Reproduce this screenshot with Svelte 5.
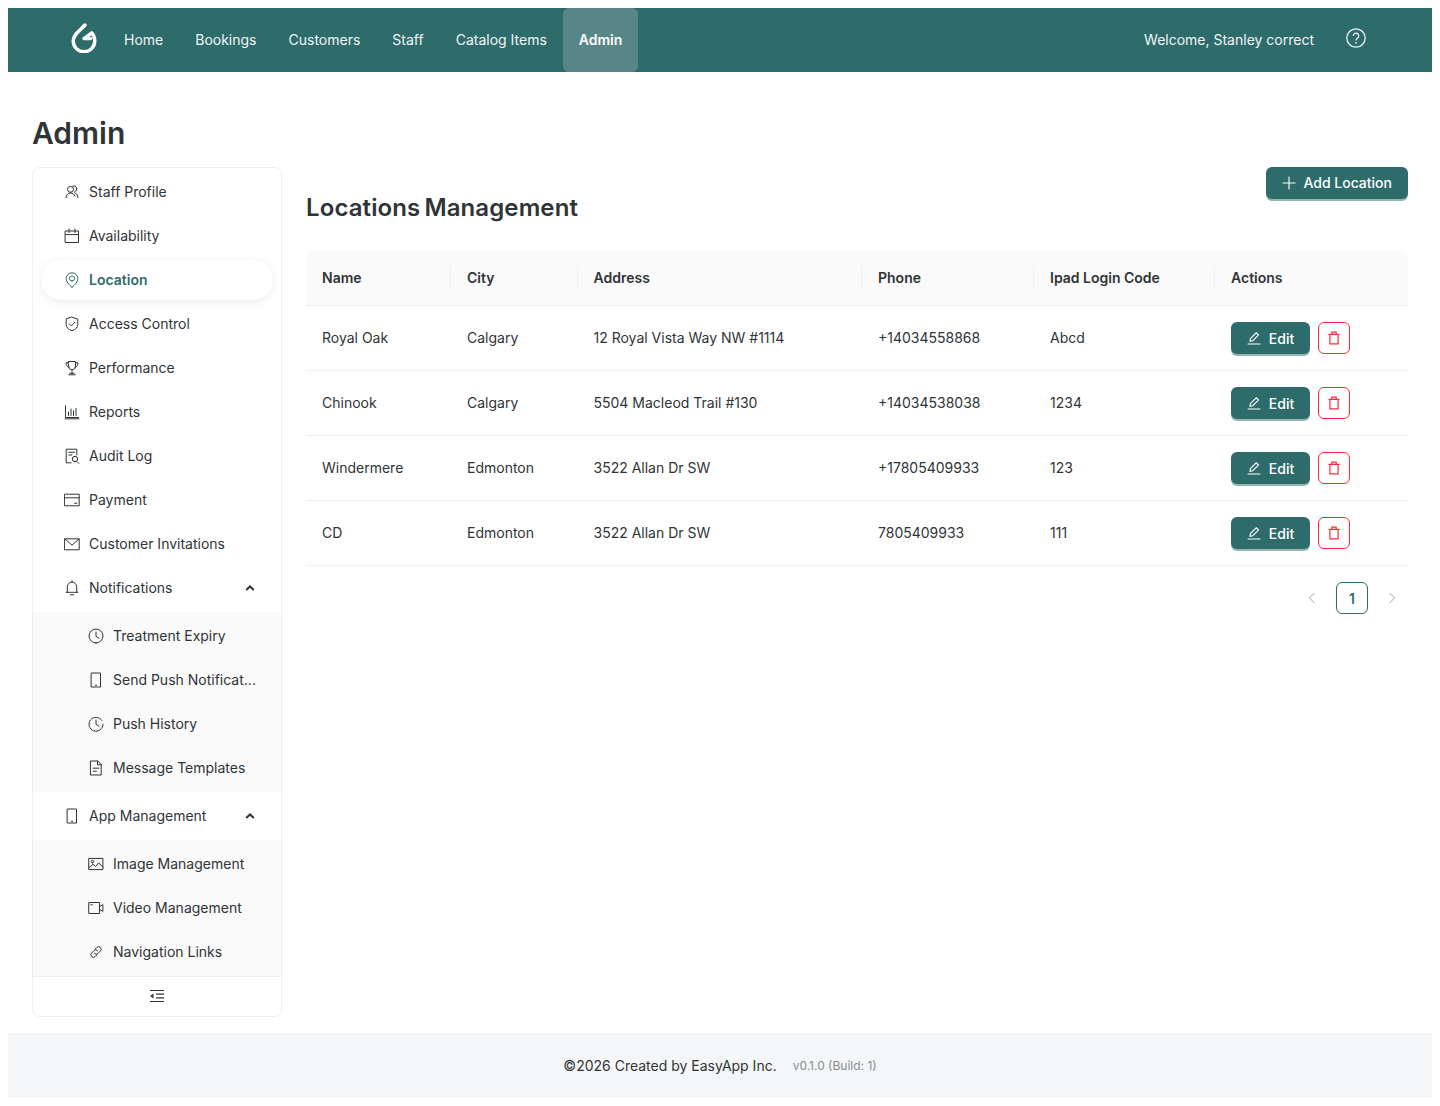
<script>
  const nav = ['Home', 'Bookings', 'Customers', 'Staff', 'Catalog Items', 'Admin'];
  const icons = {
    user: 'M6.500 8.400a3 3 0 1 0 0-6 3 3 0 0 0 0 6zM8.800 2a3 3 0 1 1 1.800 5.800M2 13.800c.4-3 2.100-4.800 4.500-4.800 2.200 0 3.700 1.200 4.400 3.200M10.600 8.600c1.800.5 3 2.300 3.400 5.200',
    calendar: 'M1.500 3h13v11.500h-13zM1.500 6.600h13M5 1v3.500M11 1v3.500',
    pin: 'M8 15.200C4.800 12.500 2.200 9.800 2.200 6.600a5.800 5.800 0 0 1 11.600 0c0 3.200-2.600 5.900-5.800 8.600zM8 9a2.500 2.500 0 1 0 0-5 2.500 2.500 0 0 0 0 5z',
    shield: 'M8 1.200l5.800 2v5.200c0 3-2.400 5.200-5.800 6.400-3.400-1.200-5.800-3.400-5.800-6.400V3.200zM5.300 7.800l2.100 2.100 3.400-3.600',
    trophy: 'M4.500 1.500h7v4.800a3.500 3.500 0 0 1-7 0zM4.500 2.800H2c0 2.400 1 4 2.900 4.600M11.500 2.800H14c0 2.400-1 4-2.900 4.600M8 9.800v3.500M4.800 14.800h6.400M5.800 13.300h4.400',
    chart: 'M1.500 1.800v11.700h13M1 14.800h14M4.500 11.500V8M7 11.500V5M9.500 11.500V7M12 11.500V4.500',
    audit: 'M12.800 7V1.200H2.200v13.600h5M4.800 4.300h5.600M4.800 7h3M11 13.700a2.700 2.700 0 1 0 0-5.400 2.700 2.700 0 0 0 0 5.400zM13 13.600l1.800 1.800',
    card: 'M.800 2.200h14.400v11.600H.800zM.800 5.800h14.400M10.500 11.200H13',
    mail: 'M.800 2.800h14.400v11H.800zM1.100 3.100L8 9.200l6.900-6.100',
    bell: 'M3.300 12.200V6.800a4.700 4.700 0 0 1 9.400 0v5.400M2 12.300h12M6.300 14.800h3.400M8 .8v1.400',
    clock: 'M8 15a7 7 0 1 0 0-14 7 7 0 0 0 0 14zM8 4v4.300l2.900 1.900',
    phone: 'M3.500 1h9v14h-9zM7.400 13.200h1.200',
    history: 'M13.900 4.500A7 7 0 1 0 15 8.300M8 4v4.300l2.900 1.900',
    file: 'M2.800 1h7L13.200 4.600V15H2.800zM9.500 1v3.800h3.700M5.200 8.200h5.600M5.200 11.200h3.300',
    image: 'M1.100 2.400h13.800v11.200H1.100zM1.100 11.600l3.900-3.300 2.600 2.200 3.100-3.700 4.200 4.400M4.500 6.800a1.300 1.300 0 1 0 0-2.600 1.300 1.300 0 0 0 0 2.600z',
    video: 'M1.100 2.500h10.500v11H1.100zM11.600 6.400l3.300-1.700v6.600l-3.300-1.700M2.800 4.800h1.600',
    link: 'M7.200 5l1.500-1.500a2.500 2.500 0 0 1 3.700 3.500L10 9.400a2.500 2.500 0 0 1-3.500 0M8.800 11l-1.500 1.500a2.500 2.500 0 0 1-3.700-3.500L6 6.600a2.500 2.500 0 0 1 3.500 0'
  };
  const topItems = [
    ['user', 'Staff Profile'], ['calendar', 'Availability'], ['pin', 'Location', true],
    ['shield', 'Access Control'], ['trophy', 'Performance'], ['chart', 'Reports'],
    ['audit', 'Audit Log'], ['card', 'Payment'], ['mail', 'Customer Invitations']
  ];
  const notif = [['clock', 'Treatment Expiry'], ['phone', 'Send Push Notificat...'], ['history', 'Push History'], ['file', 'Message Templates']];
  const appMgmt = [['image', 'Image Management'], ['video', 'Video Management'], ['link', 'Navigation Links']];
  const columns = ['Name', 'City', 'Address', 'Phone', 'Ipad Login Code', 'Actions'];
  const rows = [
    ['Royal Oak', 'Calgary', '12 Royal Vista Way NW #1114', '+14034558868', 'Abcd'],
    ['Chinook', 'Calgary', '5504 Macleod Trail #130', '+14034538038', '1234'],
    ['Windermere', 'Edmonton', '3522 Allan Dr SW', '+17805409933', '123'],
    ['CD', 'Edmonton', '3522 Allan Dr SW', '7805409933', '111']
  ];
</script>

{#snippet icon(name)}
  <svg class="ico" viewBox="0 0 16 16" aria-hidden="true"><path d={icons[name]} /></svg>
{/snippet}

{#snippet chevron()}
  <svg class="chev" viewBox="0 0 10 6" aria-hidden="true"><path d="M1.200 5L5 1.400 8.800 5" /></svg>
{/snippet}

<div class="page">
  <header class="topbar">
    <svg class="logo" viewBox="0 0 26 30" aria-hidden="true">
      <path d="M14 2C9.500 7 2.200 11 2.200 18a10.800 10.800 0 0 0 21.600 0c0-3.200-1-6-3-8.200L13 15.500h6.500" />
    </svg>
    <nav class="tabs">
      {#each nav as n}
        <a class="tab" class:current={n === 'Admin'} href="#top">{n}</a>
      {/each}
    </nav>
    <div class="user">
      <span>Welcome, Stanley correct</span>
      <svg class="help" viewBox="0 0 20 20" aria-hidden="true">
        <circle cx="10" cy="10" r="9.200" />
        <path d="M7.300 7.800a2.700 2.700 0 1 1 4.300 2.200c-1 .7-1.600 1.200-1.600 2.400" />
        <circle class="dot" cx="10" cy="14.800" r=".9" />
      </svg>
    </div>
  </header>

  <main class="main">
    <h1>Admin</h1>
    <div class="columns">
      <aside class="side">
        <div class="menu">
          {#each topItems as [ic, label, active]}
            <div class="item" class:active>{@render icon(ic)}<span class="label">{label}</span></div>
          {/each}
          <div class="item">{@render icon('bell')}<span class="label">Notifications</span>{@render chevron()}</div>
          <div class="sub">
            {#each notif as [ic, label]}
              <div class="item">{@render icon(ic)}<span class="label">{label}</span></div>
            {/each}
          </div>
          <div class="item">{@render icon('phone')}<span class="label">App Management</span>{@render chevron()}</div>
          <div class="sub">
            {#each appMgmt as [ic, label]}
              <div class="item">{@render icon(ic)}<span class="label">{label}</span></div>
            {/each}
          </div>
        </div>
        <div class="collapse">
          <svg viewBox="0 0 16 14" aria-hidden="true">
            <path d="M1 1.500h14M7 5.200h8M7 8.800h8M1 12.500h14" />
            <path class="fill" d="M4.500 4.500v5L1 7z" />
          </svg>
        </div>
      </aside>

      <section class="content">
        <div class="content-head">
          <h2>Locations Management</h2>
          <button class="btn add">
            <svg viewBox="0 0 14 14" aria-hidden="true"><path d="M7 1v12M1 7h12" /></svg>
            <span class="label">Add Location</span>
          </button>
        </div>
        <table>
          <thead>
            <tr>{#each columns as c}<th>{c}</th>{/each}</tr>
          </thead>
          <tbody>
            {#each rows as r}
              <tr>
                {#each r as v}<td>{v}</td>{/each}
                <td class="action-cell">
                  <div class="actions">
                    <button class="btn edit">
                      <svg viewBox="0 0 14 14" aria-hidden="true"><path d="M1 13h12M3 10.200l.5-2.700 5.700-5.700 2.300 2.300-5.700 5.600z" /></svg>
                      Edit
                    </button>
                    <button class="del" aria-label="Delete">
                      <svg viewBox="0 0 14 14" aria-hidden="true"><path d="M1.500 3.300h11M4.800 3.300V1.200h4.400v2.100M2.900 3.300v9.500h8.200V3.300" /></svg>
                    </button>
                  </div>
                </td>
              </tr>
            {/each}
          </tbody>
        </table>
        <div class="pager">
          <svg viewBox="0 0 8 12" aria-hidden="true"><path d="M6.500 1L1.500 6l5 5" /></svg>
          <span class="pg">1</span>
          <svg viewBox="0 0 8 12" aria-hidden="true"><path d="M1.500 1l5 5-5 5" /></svg>
        </div>
      </section>
    </div>
  </main>

  <footer class="foot">
    <span>©2026 Created by EasyApp Inc.</span>
    <small>v0.1.0 (Build: 1)</small>
  </footer>
</div>

<style>
  :global(body) {
    margin: 0;
    background: #fff;
  }
  .page {
    padding: 8px;
    font-family: Inter, "Liberation Sans", sans-serif;
    font-size: 14px;
    color: #2f3437;
  }
  .topbar {
    height: 64px;
    background: #2e6b6b;
    display: flex;
    align-items: center;
    padding: 0 66px 0 63px;
  }
  .logo {
    width: 26px;
    height: 30px;
    margin: 0 11px 4px 0;
    fill: none;
    stroke: #fff;
    stroke-width: 3.400;
    stroke-linecap: round;
    stroke-linejoin: round;
  }
  .tabs {
    display: flex;
    height: 100%;
  }
  .tab {
    display: flex;
    align-items: center;
    padding: 0 16px 2px;
    color: #f1f5f5;
    text-decoration: none;
    border-radius: 6px;
  }
  .tab.current {
    background: #588686;
    font-weight: 600;
    color: #fff;
  }
  .user {
    margin-left: auto;
    display: flex;
    align-items: center;
    gap: 32px;
    color: #f1f5f5;
  }
  .user span {
    margin-bottom: 2px;
  }
  .help {
    width: 20px;
    height: 20px;
    margin-top: -4px;
    fill: none;
    stroke: #f1f5f5;
    stroke-width: 1.300;
  }
  .help .dot {
    fill: #f1f5f5;
    stroke: none;
  }
  .main {
    padding: 37px 24px 16px;
  }
  h1 {
    margin: 0 0 10px;
    font-size: 30px;
    line-height: 48px;
    font-weight: 600;
    color: #2f3437;
  }
  .columns {
    display: flex;
    gap: 24px;
    align-items: flex-start;
  }
  .side {
    width: 250px;
    box-sizing: border-box;
    flex: none;
    border: 1px solid #f0f0f0;
    border-radius: 8px;
    overflow: hidden;
    background: #fff;
  }
  .menu {
    padding-top: 4px;
  }
  .item {
    height: 40px;
    margin: 0 8px 4px;
    padding: 0 15px 0 23px;
    display: flex;
    align-items: center;
    gap: 9px;
    border-radius: 20px;
    white-space: nowrap;
  }
  .label {
    margin-bottom: 2px;
  }
  .item.active {
    color: #2e6b6b;
    font-weight: 600;
    box-shadow: 0 2px 10px rgba(0, 0, 0, 0.08);
  }
  .sub {
    display: flow-root;
    background: #fafafa;
    padding-top: 4px;
    margin-bottom: 4px;
  }
  .sub .item {
    padding-left: 47px;
    padding-right: 8px;
  }
  .sub:last-child {
    margin-bottom: 0;
  }
  .ico {
    width: 16px;
    height: 16px;
    flex: none;
    fill: none;
    stroke: currentColor;
    stroke-width: 1;
    stroke-linejoin: round;
    stroke-linecap: round;
  }
  .chev {
    width: 10px;
    height: 6px;
    margin-left: auto;
    margin-right: 3px;
    fill: none;
    stroke: #2f3437;
    stroke-width: 2;
  }
  .collapse {
    height: 40px;
    box-sizing: border-box;
    padding-bottom: 2px;
    border-top: 1px solid #f0f0f0;
    display: flex;
    align-items: center;
    justify-content: center;
  }
  .collapse svg {
    width: 16px;
    height: 14px;
    fill: none;
    stroke: #2f3437;
    stroke-width: 1.200;
  }
  .collapse .fill {
    fill: #2f3437;
    stroke: none;
  }
  .content {
    flex: 1;
    min-width: 0;
  }
  .content-head {
    display: flex;
    justify-content: space-between;
    align-items: flex-start;
    margin-bottom: 27px;
  }
  h2 {
    margin: 25px 0 0;
    font-size: 24px;
    line-height: 32px;
    font-weight: 600;
    letter-spacing: 0.1px;
    word-spacing: -2px;
    color: #2f3437;
  }
  .btn {
    font: inherit;
    color: #fff;
    background: #2e6b6b;
    border: 0;
    border-radius: 6px;
    height: 32px;
    display: inline-flex;
    align-items: center;
    box-shadow: 0 2px 0 rgba(46, 107, 107, 0.5);
  }
  .btn svg {
    fill: none;
    stroke: #fff;
    stroke-width: 1.100;
    stroke-linecap: round;
  }
  .add {
    height: 32px;
    padding: 0 16px;
    gap: 7px;
    font-weight: 500;
  }
  .add svg {
    width: 14px;
    height: 14px;
  }
  .edit {
    width: 79px;
    justify-content: center;
    gap: 8px;
    font-weight: 500;
  }
  .edit svg {
    width: 14px;
    height: 14px;
  }
  table {
    width: 100%;
    table-layout: fixed;
    border-collapse: separate;
    border-spacing: 0;
  }
  th {
    height: 55px;
    box-sizing: border-box;
    background: #fafafa;
    border-bottom: 1px solid #f0f0f0;
    text-align: left;
    font-weight: 600;
    padding: 0 16px 2px;
    position: relative;
  }
  th:first-child {
    width: 145px;
    border-top-left-radius: 8px;
  }
  th:nth-child(2) {
    width: 126.500px;
  }
  th:nth-child(3) {
    width: 284.500px;
  }
  th:nth-child(4) {
    width: 172px;
  }
  th:nth-child(5) {
    width: 181px;
  }
  th:last-child {
    border-top-right-radius: 8px;
  }
  th:not(:last-child)::after {
    content: "";
    position: absolute;
    right: 0;
    top: 16px;
    height: 22px;
    width: 1px;
    background: #f0f0f0;
  }
  td {
    height: 65px;
    box-sizing: border-box;
    padding: 0 16px 2px;
    border-bottom: 1px solid #f0f0f0;
  }
  td.action-cell {
    padding-bottom: 0;
  }
  .actions {
    display: flex;
    gap: 8px;
  }
  .del {
    width: 32px;
    height: 32px;
    padding: 0;
    background: #fff;
    border: 1px solid #ff2a3a;
    border-radius: 6px;
    display: inline-flex;
    align-items: center;
    justify-content: center;
  }
  .del svg {
    width: 14px;
    height: 14px;
    fill: none;
    stroke: #ff2a3a;
    stroke-width: 1.200;
  }
  .pager {
    display: flex;
    justify-content: flex-end;
    align-items: center;
    gap: 20px;
    margin-top: 16px;
    padding-right: 12px;
  }
  .pager svg {
    width: 8px;
    height: 12px;
    fill: none;
    stroke: #c8c8c8;
    stroke-width: 1.100;
  }
  .pg {
    width: 32px;
    height: 32px;
    box-sizing: border-box;
    border: 1px solid #2e6b6b;
    border-radius: 6px;
    display: flex;
    align-items: center;
    justify-content: center;
    color: #2e6b6b;
    font-weight: 600;
  }
  .foot {
    height: 65px;
    background: #f5f6f8;
    display: flex;
    align-items: center;
    justify-content: center;
    gap: 16px;
  }
  .foot small {
    font-size: 12px;
    color: #8a8d90;
  }
</style>
